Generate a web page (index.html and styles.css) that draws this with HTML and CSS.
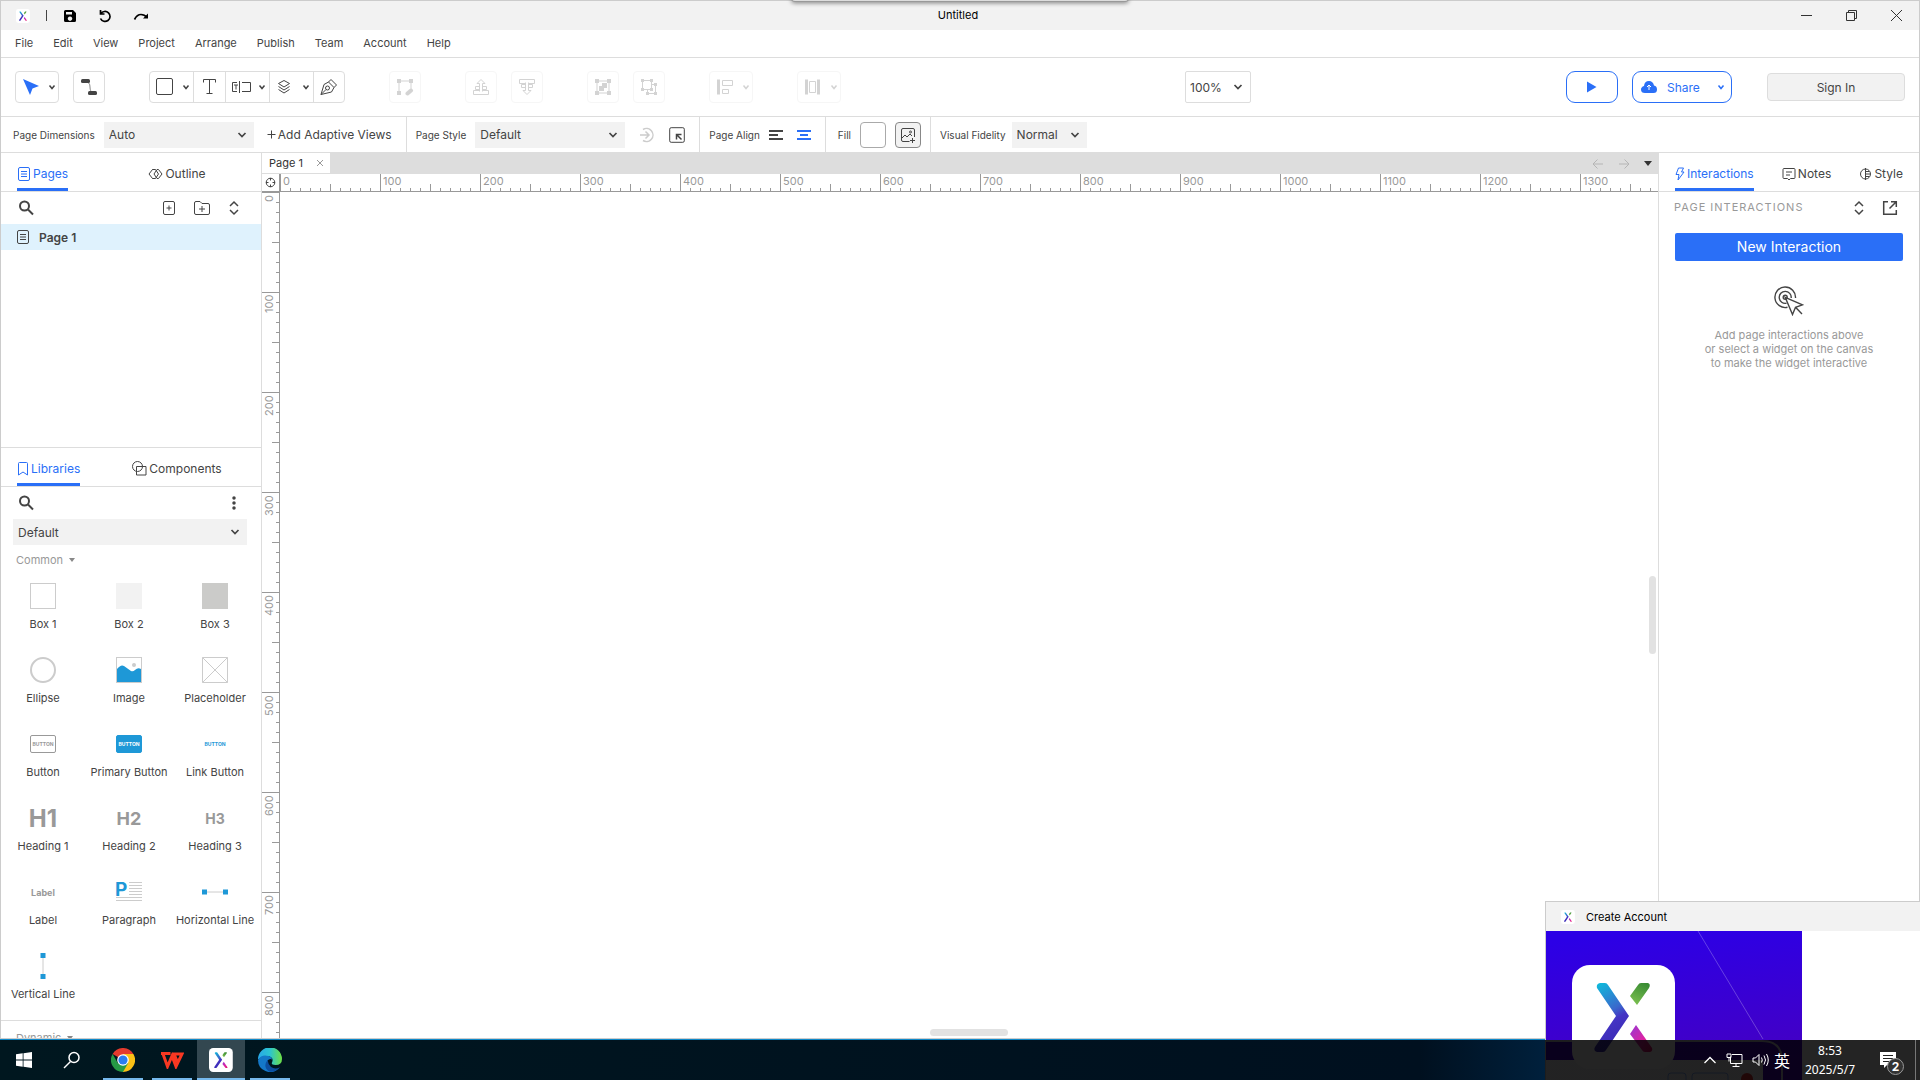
FILE: index.html
```html
<!DOCTYPE html>
<html lang="en">
<head>
  <meta charset="UTF-8" />
  <meta name="viewport" content="width=device-width, initial-scale=1.0" />
  <title>Untitled</title>
  <link rel="stylesheet" href="styles.css">
</head>
<body>
  <svg class="sprite" aria-hidden="true">
    <defs>
      <linearGradient id="gBlue" x1="0" y1="0" x2="0.3" y2="1">
        <stop offset="0" stop-color="#0cc0dc" />
        <stop offset="0.5" stop-color="#3a68cc" />
        <stop offset="0.65" stop-color="#4434c4" />
        <stop offset="1" stop-color="#3a2ab4" />
      </linearGradient>
      <linearGradient id="gGreen" x1="0.7" y1="0" x2="0.3" y2="1">
        <stop offset="0" stop-color="#3a8c34" />
        <stop offset="1" stop-color="#7cc050" />
      </linearGradient>
      <linearGradient id="gPink" x1="0" y1="0" x2="1" y2="1">
        <stop offset="0" stop-color="#9638d4" />
        <stop offset="0.6" stop-color="#e022a0" />
        <stop offset="1" stop-color="#e01060" />
      </linearGradient>
    </defs>
    <symbol id="logo" viewBox="26 34 104 104">
      <rect x="26" y="34" width="103" height="104" rx="18" fill="#fff" stroke="none" />
      <g stroke="none">
        <path d="M54 52h5q2 0 3 2l21 31-23 34q-1 2-3 2h-6q-4-1-2-5l21-31-19-28q-1-4 3-5z" fill="url(#gBlue)" />
        <path d="M95 52h7q3 1 1 5L91 74l-7-9 8-11q1-2 3-2z" fill="url(#gGreen)" />
        <path d="M90 94l16 23q1 3-2 4h-5q-2 0-3-2L84 103z" fill="url(#gPink)" />
      </g>
    </symbol>
    <symbol id="chev" viewBox="0 0 10 10"><path d="M2.500 3.500l2.500 3 2.500-3" /></symbol>
    <symbol id="page" viewBox="0 0 14 16"><rect x="1.500" y="1.500" width="11" height="13" rx="1.500" /><path d="M4 5.500h6M4 8h6M4 10.500h6" /></symbol>
    <symbol id="search" viewBox="0 0 16 16"><circle cx="6.500" cy="6" r="4.500" /><path d="M10 9.500l5 5" /></symbol>
    <symbol id="expand" viewBox="0 0 12 16"><path d="M2 6l4-4 4 4M2 10l4 4 4-4" /></symbol>
  </svg>

  <div class="app">
    <div class="drag-handle"></div>
    <header class="titlebar">
      <div class="quick">
        <svg class="logo-small"><use href="#logo" /></svg>
        <span class="bar"></span>
        <button aria-label="Save"><svg class="solid" width="14" height="14" viewBox="0 0 14 14"><path fill-rule="evenodd" d="M1 2.500Q1 1 2.500 1H10l3 3v7.500q0 1.500-1.500 1.500h-9Q1 13 1 11.500zM3 3v2.500h6V3zM7 7.500a2.200 2.200 0 1 0 .01 0z" /></svg></button>
        <button aria-label="Undo"><svg class="dark" width="14" height="14" viewBox="0 0 14 14"><path d="M2.500 1v4h4M2.800 4.800A5 5 0 1 1 2.500 9.500" /></svg></button>
        <button aria-label="Redo"><svg class="dark" width="16" height="14" viewBox="0 0 16 14"><path d="M1.500 10.500Q4 5.500 8 5.500q3.500 0 6 3" /><path d="M15 4.500v5h-5z" fill="#000" stroke="none" /></svg></button>
      </div>
      <div class="title">Untitled</div>
      <div class="winbuttons">
        <button aria-label="Minimize"><svg width="13" height="13" viewBox="0 0 13 13"><path d="M1 6.500h11" /></svg></button>
        <button aria-label="Restore"><svg width="13" height="13" viewBox="0 0 13 13"><path d="M1.500 3.500h8v8h-8zM3.500 3.500v-2h8v8h-2" /></svg></button>
        <button aria-label="Close"><svg width="13" height="13" viewBox="0 0 13 13"><path d="M1 1l11 11M12 1L1 12" /></svg></button>
      </div>
    </header>

    <nav class="menu">
      <a href="#">File</a><a href="#">Edit</a><a href="#">View</a><a href="#">Project</a><a href="#">Arrange</a><a href="#">Publish</a><a href="#">Team</a><a href="#">Account</a><a href="#">Help</a>
    </nav>

    <div class="toolbar">
      <div class="cluster">
        <button class="tool wide" aria-label="Select"><svg width="18" height="18" viewBox="0 0 18 18"><path d="M1 1l16 7-6.500 2.500L8 17z" fill="#2a6ff7" stroke="none" /></svg><svg class="chev"><use href="#chev" /></svg></button>
        <button class="tool" aria-label="Connect"><svg width="18" height="18" viewBox="0 0 18 18"><path d="M6 4q4 0 4 5t3 5" stroke="#888" /><rect x="1" y="1" width="9" height="4" rx="1.500" fill="#444" stroke="none" /><rect x="8" y="13" width="9" height="4" rx="1.500" fill="#444" stroke="none" /></svg></button>
      </div>
      <div class="cluster joined">
        <button class="tool wide" aria-label="Rectangle"><svg width="18" height="18" viewBox="0 0 18 18"><rect x="0.500" y="0.500" width="16" height="16" rx="1.500" /></svg><svg class="chev"><use href="#chev" /></svg></button>
        <button class="tool" aria-label="Text"><svg width="16" height="18" viewBox="0 0 16 18"><path d="M1.500 4.500V1.500h12v3M7.500 1.500v14M4.500 15.500h6" /></svg></button>
        <button class="tool wide" aria-label="Form"><svg width="20" height="14" viewBox="2 0 20 14"><path d="M7 2.500H2.500v9H7M4 5h4M6 5v4.500M9.500 1v12M12 2.500h8.500v9H12" /></svg><svg class="chev"><use href="#chev" /></svg></button>
        <button class="tool wide" aria-label="Layers"><svg width="16" height="16" viewBox="0 0 16 16"><path d="M8 1.500l5.500 3L8 8 2.500 4.500zM2.500 7.500L8 11l5.500-3.500M2.500 10.500L8 14l5.500-3.500" /></svg><svg class="chev"><use href="#chev" /></svg></button>
        <button class="tool" aria-label="Pen"><svg width="18" height="18" viewBox="0 0 18 18"><path d="M11 1.500L16.500 7 14 9.500l-5.500-5.500zM8.500 4L4 6.500 1 16.500l10.500-2.500L14 9.500M1 16.500L6 11.500" /><circle cx="7.500" cy="10" r="2" /></svg></button>
      </div>
      <div class="cluster">
        <button class="tool" disabled aria-label="Edit points"><svg width="18" height="18" viewBox="0 0 18 18"><path d="M3 3h12M3 3v12M15 3v8" /><path d="M1 1h4v4H1zM13 1h4v4h-4zM1 13h4v4H1z" fill="#555" stroke="none" /><path d="M11.500 15.500l3.500-3" stroke-width="4" stroke-linecap="round" /></svg></button>
      </div>
      <div class="cluster">
        <button class="tool" disabled aria-label="Bring to front"><svg width="18" height="18" viewBox="0 0 18 18"><path d="M7.500 13.500v-8H5L9 1.500l4 4h-2.500v8M7 8.500H3.500v3H7M11 8.500h3.500v3H11M7.500 12.500h-6v4h15v-4h-6" /></svg></button>
        <button class="tool" disabled aria-label="Send to back"><svg width="18" height="18" viewBox="0 0 18 18"><path d="M7.500 4.500v8H5l4 4 4-4h-2.500v-8M7 9.500H3.500v-3H7M11 9.500h3.500v-3H11M7.500 5.500h-6v-4h15v4h-6" /></svg></button>
      </div>
      <div class="cluster">
        <button class="tool" disabled aria-label="Group"><svg width="18" height="18" viewBox="0 0 18 18"><path d="M3 3h12v12H3z" /><path d="M1 1h4v4H1zM13 1h4v4h-4zM1 13h4v4H1zM13 13h4v4h-4zM5 8h3V5h5v5h-3v3H5z" fill="#555" stroke="none" /></svg></button>
        <button class="tool" disabled aria-label="Ungroup"><svg width="18" height="18" viewBox="0 0 18 18"><path d="M2.500 2.500h9v9h-9zM7.500 11.500v4h8v-9h-4" /><path d="M1 1h3v3H1zM10 1h3v3h-3zM1 10h3v3H1zM10 10h3v3h-3zM14 5h3v3h-3zM14 14h3v3h-3zM6 14h3v3H6z" fill="#555" stroke="none" /></svg></button>
      </div>
      <div class="cluster">
        <button class="tool wide" disabled aria-label="Align"><svg width="18" height="18" viewBox="0 0 18 18"><path d="M2.500 1.500v15" stroke-width="3" /><path d="M6.500 2.500h10v5h-10zM6.500 11.500h6v4h-6z" /></svg><svg class="chev"><use href="#chev" /></svg></button>
      </div>
      <div class="cluster">
        <button class="tool wide" disabled aria-label="Distribute"><svg width="18" height="18" viewBox="0 0 18 18"><path d="M2.500 1.500v15M14.500 1.500v15" stroke-width="3" /><path d="M5.500 3.500h6v11h-6z" /></svg><svg class="chev"><use href="#chev" /></svg></button>
      </div>
      <span class="spacer-left"></span>
      <select class="zoom" aria-label="Zoom"><option>100%</option></select>
      <span class="spacer-right"></span>
      <button class="pill play" aria-label="Preview"><svg width="10" height="12" viewBox="0 0 10 12"><path d="M0 0.500L9.500 6 0 11.500z" fill="#2a6ff7" stroke="none" /></svg></button>
      <button class="pill share">
        <svg width="16" height="14" viewBox="0 0 16 14"><path d="M4 13Q0 13 0 9.500 0 7 3 6 3.500 1 8 1q4 0 5 4.500 3 .5 3 4Q16 13 12.500 13z" fill="#2a6ff7" stroke="none" /><path d="M8 10V5M6 7l2-2 2 2" stroke="#fff" /></svg>
        <span>Share</span>
        <svg class="chev"><use href="#chev" /></svg>
      </button>
      <button class="signin">Sign In</button>
    </div>

    <div class="stylebar">
      <div class="section">
        <label for="dim">Page Dimensions</label>
        <select id="dim" class="field"><option>Auto</option></select>
        <button class="adaptive"><svg width="9" height="9" viewBox="0 0 9 9"><path d="M0.500 4.500h8M4.500 0.500v8" /></svg>Add Adaptive Views</button>
      </div>
      <div class="section">
        <label for="pstyle">Page Style</label>
        <select id="pstyle" class="field"><option>Default</option></select>
        <button class="mini faded" aria-label="Update style"><svg width="16" height="16" viewBox="0 0 16 16"><path d="M4 2.500A6.500 6.500 0 1 1 4 13.500M1 8h9M6.500 4.500L10 8l-3.500 3.500" stroke-width="1.500" /></svg></button>
        <button class="mini" aria-label="Manage styles"><svg width="16" height="16" viewBox="0 0 16 16"><rect x="0.700" y="0.700" width="14.600" height="14.600" rx="1.500" /><path d="M12.500 12.500l-4.500-4.500M7.500 12.500v-5h5" stroke-width="1.500" /></svg></button>
      </div>
      <div class="section align">
        <span>Page Align</span>
        <button aria-label="Left"><svg width="14" height="12" viewBox="0 0 14 12"><path d="M0 2h14M0 6h9M0 10h14" stroke-width="2" /></svg></button>
        <button class="mini on" aria-label="Center"><svg width="14" height="12" viewBox="0 0 14 12"><path d="M0 2h14M3 6h8M0 10h14" stroke-width="2" /></svg></button>
      </div>
      <div class="section fill">
        <span>Fill</span>
        <button class="swatch" aria-label="Fill color"></button>
        <button class="swatch image" aria-label="Fill image"><svg width="16" height="16" viewBox="0 0 16 16"><path d="M9.500 14.500H3q-1.500 0-1.500-1.500V3Q1.500 1.500 3 1.500h10q1.500 0 1.500 1.500v7M2 11l3-3 2 2 3-3 2 2M12.500 11v5M10 13.500h5" /><circle cx="10.500" cy="5" r="1" /></svg></button>
      </div>
      <div class="section fidelity">
        <label for="fid">Visual Fidelity</label>
        <select id="fid" class="field short"><option>Normal</option></select>
      </div>
    </div>

    <main class="workspace">
      <aside class="left">
        <section class="pages">
          <div class="tabs">
            <div><button class="tab active"><svg width="14" height="16"><use href="#page" /></svg>Pages</button></div>
            <div><button class="tab"><svg width="15" height="14" viewBox="0 0 15 14"><path d="M5.500 2.500h-1L1 7l3.500 4.500h1M6 7l3-4.500h1.500L14 7l-3.500 4.500H9z" /><path d="M4.500 2.500h3l3 4.500-3 4.500h-3" /></svg>Outline</button></div>
          </div>
          <div class="actions">
            <button class="mini" aria-label="Search pages"><svg class="bold" width="16" height="16"><use href="#search" /></svg></button>
            <div class="right-actions">
              <button class="mini" aria-label="Add page"><svg width="14" height="16" viewBox="0 0 14 16"><rect x="1.500" y="1.500" width="11" height="13" rx="1.500" /><path d="M4.500 8h5M7 5.500v5" /></svg></button>
              <button class="mini" aria-label="Add folder"><svg width="16" height="16" viewBox="0 0 16 16"><path d="M.5 3q0-1.500 1.500-1.500h4l2 2h6q1.500 0 1.500 1.500v8q0 1.500-1.500 1.500H2Q.5 14.500.5 13zM5 9h6M8 6v6" /></svg></button>
              <button class="mini" aria-label="Expand all"><svg class="mid" width="12" height="16"><use href="#expand" /></svg></button>
            </div>
          </div>
          <div class="page-row"><svg width="14" height="16"><use href="#page" /></svg>Page 1</div>
        </section>

        <section class="libraries">
          <div class="tabs">
            <div><button class="tab active"><svg width="12" height="14" viewBox="0 0 12 14"><path d="M1.500 1.500q0-1 1-1h7q1 0 1 1v11.500L6 10l-4.500 3z" /></svg>Libraries</button></div>
            <div><button class="tab"><svg width="15" height="15" viewBox="0 0 15 15"><circle cx="5.500" cy="5.500" r="5" /><path d="M4.500 5.500h9.500v8.500H4.500z" /></svg>Components</button></div>
          </div>
          <div class="actions">
            <button class="mini" aria-label="Search libraries"><svg class="bold" width="16" height="16"><use href="#search" /></svg></button>
            <div class="right-actions">
              <button class="mini" aria-label="Library options"><svg width="12" height="16" viewBox="0 0 12 16"><path d="M6 3v.01M6 8v.01M6 13v.01" stroke-width="3.500" stroke-linecap="round" /></svg></button>
            </div>
          </div>
          <select class="field library" aria-label="Library"><option>Default</option></select>
          <button class="category">Common <i></i></button>
          <div class="widgets">
            <figure><div class="pic"><i class="box"></i></div><figcaption>Box 1</figcaption></figure>
            <figure><div class="pic"><i class="box box2"></i></div><figcaption>Box 2</figcaption></figure>
            <figure><div class="pic"><i class="box box3"></i></div><figcaption>Box 3</figcaption></figure>
            <figure><div class="pic"><i class="box ellipse"></i></div><figcaption>Ellipse</figcaption></figure>
            <figure><div class="pic"><svg width="26" height="26" viewBox="0 0 26 26"><rect x="0.500" y="0.500" width="25" height="25" fill="#fff" stroke="#ccc" /><path d="M1 12q4-5 7-3l7 5q2 1 4-1 3-3 6-1v13H1z" fill="#1e98d7" stroke="none" /><circle cx="18" cy="8" r="2" fill="#ccc" stroke="none" /></svg></div><figcaption>Image</figcaption></figure>
            <figure><div class="pic"><svg width="26" height="26" viewBox="0 0 26 26"><path d="M.5.5h25v25H.5zM.5.5l25 25M25.500.5l-25 25" stroke="#ccc" /></svg></div><figcaption>Placeholder</figcaption></figure>
            <figure><div class="pic"><span class="btn">BUTTON</span></div><figcaption>Button</figcaption></figure>
            <figure><div class="pic"><span class="btn primary">BUTTON</span></div><figcaption>Primary Button</figcaption></figure>
            <figure><div class="pic"><span class="btn link">BUTTON</span></div><figcaption>Link Button</figcaption></figure>
            <figure><div class="pic"><b class="h1">H1</b></div><figcaption>Heading 1</figcaption></figure>
            <figure><div class="pic"><b class="h2">H2</b></div><figcaption>Heading 2</figcaption></figure>
            <figure><div class="pic"><b class="h3">H3</b></div><figcaption>Heading 3</figcaption></figure>
            <figure><div class="pic"><b class="lbl">Label</b></div><figcaption>Label</figcaption></figure>
            <figure><div class="pic"><svg class="paragraph" width="26" height="20" viewBox="0 0 26 20"><path d="M13 .5h13M13 3.500h13M13 6.500h13M13 9.500h13M13 12.500h13M0 15.500h26M0 18.500h26" stroke="#ccc" /><text x="-1" y="14" class="para">P</text></svg></div><figcaption>Paragraph</figcaption></figure>
            <figure><div class="pic"><svg width="26" height="6" viewBox="0 0 26 6"><path d="M0 3h26" stroke="#ccc" /><path d="M0 .5h5v5H0zM21 .5h5v5h-5z" fill="#1e98d7" stroke="none" /></svg></div><figcaption>Horizontal Line</figcaption></figure>
            <figure><div class="pic"><svg width="6" height="26" viewBox="0 0 6 26"><path d="M3 0v26" stroke="#ccc" /><path d="M.5 0h5v5h-5zM.5 21h5v5h-5z" fill="#1e98d7" stroke="none" /></svg></div><figcaption>Vertical Line</figcaption></figure>
          </div>
          <button class="category next">Dynamic <i></i></button>
        </section>
      </aside>

      <section class="center">
        <div class="doc-tabs">
          <div class="doc-tab">Page 1<button aria-label="Close tab"><svg width="8" height="8" viewBox="0 0 8 8"><path d="M1 1l6 6M7 1L1 7" /></svg></button></div>
          <div class="doc-nav">
            <svg width="12" height="12" viewBox="0 0 12 12"><path d="M11 6H1M5.500 1.500L1 6l4.500 4.500" /></svg>
            <svg width="12" height="12" viewBox="0 0 12 12"><path d="M1 6h10M6.500 1.500L11 6l-4.500 4.500" /></svg>
            <i></i>
          </div>
        </div>
        <div class="board">
          <div class="corner"><svg width="11" height="11" viewBox="0 0 11 11"><circle cx="5.500" cy="5.500" r="4.300" /><path d="M5.500 1v2.500M5.500 7.500V10M1 5.500h2.500M7.500 5.500H10" /></svg></div>
          <div class="ruler-x"><span>0</span><span>100</span><span>200</span><span>300</span><span>400</span><span>500</span><span>600</span><span>700</span><span>800</span><span>900</span><span>1000</span><span>1100</span><span>1200</span><span>1300</span></div>
          <div class="ruler-y"><span>0</span><span>100</span><span>200</span><span>300</span><span>400</span><span>500</span><span>600</span><span>700</span><span>800</span></div>
          <div class="canvas"><i class="scroll-y"></i><i class="scroll-x"></i></div>
        </div>
      </section>

      <aside class="right">
        <div class="tabs">
          <button class="tab active"><svg width="10" height="14" viewBox="0 0 10 14"><path d="M3.500 1h5L6.500 5H9L3 13l1-5.500H1z" /></svg>Interactions</button>
          <button class="tab"><svg width="14" height="14" viewBox="0 0 14 14"><path d="M2 1.500h10q1 0 1 1v8q0 1-1 1H8.500L7 13l-1.500-1.500H2q-1 0-1-1v-8q0-1 1-1zM4 5h6M4 8h4" /></svg>Notes</button>
          <button class="tab"><svg width="13" height="14" viewBox="0 0 13 14"><circle cx="6.500" cy="7" r="5" /><path d="M6.500 1v12M7 4.500h3M7 7h4M7 9.500h3" /></svg>Style</button>
        </div>
        <div class="panel-head">
          <span>PAGE INTERACTIONS</span>
          <button class="mini" aria-label="Expand"><svg class="mid" width="12" height="16"><use href="#expand" /></svg></button>
          <button class="mini" aria-label="Open in window"><svg class="mid" width="16" height="16" viewBox="0 0 16 16"><path d="M6 1.700H1.700v12.600h12.600V10M9 1.700h5.300V7M14 2L7.500 8.500" /></svg></button>
        </div>
        <button class="new-interaction">New Interaction</button>
        <div class="hint">
          <svg class="target" width="30" height="30" viewBox="0 0 30 30"><path d="M13.500 21.300A10.300 10.300 0 1 1 21.500 12M12.500 17.200A6 6 0 1 1 17.200 12" /><circle cx="11.200" cy="11.200" r="2" /><path d="M11.200 11.300l17.300 7.500-7 2.500-3 7.200zM21.500 21.300L28 28" /></svg>
          <p>Add page interactions above<br>or select a widget on the canvas<br>to make the widget interactive</p>
        </div>
      </aside>
    </main>
  </div>

  <div class="popup">
    <div class="popup-title"><svg class="logo-small"><use href="#logo" /></svg>Create Account</div>
    <svg class="art" width="256" height="149" viewBox="0 0 256 149">
      <defs><linearGradient id="gArt" x1="0.400" y1="0" x2="0.600" y2="1"><stop offset="0" stop-color="#2c00e6" /><stop offset="1" stop-color="#4600c0" /></linearGradient></defs>
      <path d="M0 0h256v149H0z" fill="url(#gArt)" stroke="none" />
      <path d="M152 0l65 108" stroke="#fff" stroke-opacity="0.250" />
      <path d="M0 110h216q20 0 20 20v19" stroke="#c8c8d8" stroke-width="2" />
      <path d="M0 129h217v20H0z" fill="#f4f4f6" stroke="none" />
      <rect x="122" y="142" width="18" height="10" rx="3" stroke="#2a6ff7" stroke-opacity="0.500" />
      <rect x="146" y="142" width="36" height="10" rx="3" stroke="#2a6ff7" stroke-opacity="0.500" />
      <circle cx="201" cy="148" r="6" fill="#e03030" stroke="none" />
      <use href="#logo" x="26" y="34" width="104" height="104" />
    </svg>
  </div>

  <footer class="taskbar">
    <button class="task" aria-label="Start"><svg width="16" height="16" viewBox="0 0 16 16"><path d="M0 2.300l6.700-1v6.200H0zM7.500 1.200L16 0v7.500H7.500zM0 8.500h6.700v6.200l-6.700-1zM7.500 8.500H16V16l-8.500-1.200z" fill="#fff" stroke="none" /></svg></button>
    <button class="task" aria-label="Search"><svg width="18" height="18" viewBox="0 0 18 18"><circle cx="11" cy="6.500" r="5" stroke="#fff" stroke-width="1.500" /><path d="M7.500 10.500L1 17" stroke="#fff" stroke-width="1.500" /></svg></button>
    <div class="running">
      <button class="task open" aria-label="Chrome"><svg width="24" height="24" viewBox="0 0 24 24"><g stroke="none"><path d="M12 12L1.600 6A12 12 0 0 1 22.400 6z" fill="#e33b2e" /><path d="M12 12V6h10.400A12 12 0 0 1 12 24z" fill="#fbc116" /><path d="M12 12l5.200 3L12 24A12 12 0 0 1 1.600 6l5.200 9z" fill="#269a45" /><circle cx="12" cy="12" r="5.800" fill="#fff" /><circle cx="12" cy="12" r="4.600" fill="#2a7df0" /></g></svg></button>
      <button class="task open" aria-label="WPS"><svg width="24" height="18" viewBox="0 0 24 18"><path d="M1 2.500h9.500M3 3l4.500 12.500L12 5l4 10.500L22 3h-8l3.500 8" stroke="#f93822" stroke-width="3" /></svg></button>
      <button class="task open current" aria-label="Axure RP"><svg width="24" height="24"><use href="#logo" /></svg></button>
      <button class="task open" aria-label="Edge"><svg width="24" height="24" viewBox="0 0 24 24"><defs><linearGradient id="gEdge" x1="0" y1="0.300" x2="1" y2="0.300"><stop offset="0" stop-color="#28a8e8" /><stop offset="0.500" stop-color="#2cc4d0" /><stop offset="1" stop-color="#6ee044" /></linearGradient></defs><g stroke="none"><path d="M0 11.500A12 12 0 0 1 24 11q0 6-6.500 6-5 0-3.300-3Q16 9 9.500 8 4 8 0 11.500z" fill="url(#gEdge)" /><path d="M0 12q3-5 8.500-4.300 5 .3 5.600 3.800-2.600-1.500-4.600 1-2 4 1 7.500 4 4 10 .5A12 12 0 0 1 0 12z" fill="#1478c8" /><path d="M9.500 12q-5 7 1.500 11.500 7 1 11-4.300-5 2.500-9-.2-3-3-3.500-7z" fill="#0c4fa0" /></g></svg></button>
    </div>
    <div class="tray">
      <svg width="14" height="10" viewBox="0 0 14 10"><path d="M1.500 8L7 2.500 12.500 8" stroke-width="1.300" /></svg>
      <svg width="17" height="14" viewBox="0 0 17 14"><path d="M4.500 3.500v7h11.500v-9H6M10 10.500v3M6.500 13.500h7M1 1h4v3.500H1zM3 4.500v4" /></svg>
      <svg width="17" height="14" viewBox="0 0 17 14"><path d="M1 5h2.500L7 1.500v11L3.500 9H1zM9.500 4.500q1.500 2.500 0 5M12 2.500q3 4.500 0 9M14.500 1q3.500 6 0 12" /></svg>
      <span class="ime" lang="zh">英</span>
      <div class="clock"><span>8:53</span><span>2025/5/7</span></div>
      <button class="notes" aria-label="Notifications"><svg width="16" height="16" viewBox="0 0 16 16"><path d="M0 0h16v13H7l-3 3v-3H0z" fill="#fff" stroke="none" /><path d="M3 3.500h10M3 6.500h10M3 9.500h6" stroke="#222" /></svg><span class="count">2</span></button>
      <span class="desk"></span>
    </div>
  </footer>
</body>
</html>
```
FILE: styles.css
```css
* {
  box-sizing: border-box;
}

body {
  margin: 0;
  height: 100vh;
  display: flex;
  flex-direction: column;
  position: relative;
  overflow: hidden;
  background: #0f88c8;
  font-family: Inter, "Liberation Sans", sans-serif;
  font-size: 12px;
  color: #444;
}

button,
select {
  font: inherit;
  color: inherit;
  background: none;
  border: 0;
  padding: 0;
  border-radius: 0;
}

button {
  display: flex;
  align-items: center;
  justify-content: center;
}

a {
  color: inherit;
  text-decoration: none;
}

svg {
  display: block;
  flex: none;
  fill: none;
  stroke: currentColor;
}

.sprite {
  position: absolute;
  width: 0;
  height: 0;
}

.bold {
  stroke-width: 2;
}

.mid {
  stroke-width: 1.5;
}

.app {
  flex: 1;
  min-height: 0;
  margin-bottom: 1px;
  display: flex;
  flex-direction: column;
  position: relative;
  background: #fff;
  border: 1px solid #ccc;
}

/* edge of the hidden floating bar */
.drag-handle {
  position: absolute;
  top: -3px;
  left: 50%;
  margin-left: -169px;
  width: 338px;
  height: 4px;
  border: 1px solid #999;
  border-radius: 0 0 5px 5px;
  background: #ddd;
  box-shadow: 0 1px 4px rgba(0, 0, 0, 0.5);
}

/* title bar and menu */
.titlebar {
  display: grid;
  grid-template-columns: 1fr auto 1fr;
  align-items: center;
  height: 29px;
  background: #f2f2f2;
  color: #000;
}

.title {
  padding: 0 4px 2px 0;
  font-size: 11px;
}

.quick {
  display: flex;
  align-items: center;
  gap: 21px;
  padding-left: 15px;
}

.logo-small {
  width: 14px;
  height: 14px;
}

.bar {
  width: 1px;
  height: 11px;
  margin: 0 -5px;
  background: #444;
}

.solid {
  fill: #000;
  stroke: none;
}

.dark {
  stroke: #000;
  stroke-width: 1.7;
}

.winbuttons {
  display: flex;
  justify-content: flex-end;
  gap: 32px;
  padding-right: 16px;
  color: #333;
}

.menu {
  display: flex;
  align-items: center;
  gap: 20px;
  height: 28px;
  padding: 0 0 2px 14px;
  border-bottom: 1px solid #ddd;
  font-size: 11px;
}

/* toolbar */
.toolbar {
  display: flex;
  align-items: center;
  height: 59px;
  padding: 0 14px;
  border-bottom: 1px solid #ddd;
}

.cluster {
  display: flex;
  gap: 14px;
  margin-right: 44px;
}

.tool {
  width: 32px;
  height: 32px;
  border: 1px solid #ddd;
  border-radius: 4px;
}

.tool:disabled {
  opacity: 0.25;
  color: #555;
}

.wide {
  width: 44px;
  justify-content: space-between;
  padding: 0 1px 0 6px;
}

.chev {
  width: 10px;
  height: 10px;
  stroke-width: 1.5;
}

.joined {
  gap: 0;
  border: 1px solid #ddd;
  border-radius: 4px;
}

.joined .tool {
  height: 30px;
  border-width: 0 1px 0 0;
  border-radius: 0;
}

.joined .wide {
  padding-right: 2px;
}

.joined .tool:last-child {
  width: 30px;
  border: 0;
}

.spacer-left {
  flex: 20;
}

.spacer-right {
  flex: 21;
}

.zoom,
.field {
  appearance: none;
  font-size: 12px;
  background: #f2f2f2 url("data:image/svg+xml,%3Csvg xmlns='http://www.w3.org/2000/svg' width='10' height='8' fill='none' stroke='%23444' stroke-width='1.7'%3E%3Cpath d='M1.500 2l3.500 3.500L8.500 2'/%3E%3C/svg%3E") no-repeat right 7px center;
}

.zoom {
  width: 66px;
  height: 32px;
  padding-left: 4px;
  border: 1px solid #ddd;
  border-radius: 2px;
  background-color: #fff;
}

.pill {
  height: 32px;
  border: 1px solid #2a6ff7;
  border-radius: 9px;
  color: #2a6ff7;
}

.play {
  width: 52px;
}

.share {
  width: 100px;
  margin-left: 14px;
  padding: 0 5px 0 8px;
  gap: 10px;
}

.share .chev {
  margin-left: auto;
}

.signin {
  width: 138px;
  height: 28px;
  margin-left: 35px;
  border: 1px solid #ddd;
  border-radius: 4px;
  background: #f2f2f2;
}

/* page style bar */
.stylebar {
  display: flex;
  height: 36px;
  border-bottom: 1px solid #ddd;
  font-size: 10px;
}

.section {
  display: flex;
  align-items: center;
  gap: 9px;
  padding: 0 14px 0 9px;
  border-right: 1px solid #ddd;
}

.section:first-child {
  padding-left: 12px;
}

.section:last-child {
  border: 0;
}

.field {
  width: 150px;
  height: 26px;
  padding-left: 5px;
}

.short {
  width: 75px;
}

.adaptive {
  gap: 2px;
  margin-left: 4px;
  font-size: 12px;
}

.section .mini {
  margin-left: 5px;
}

.faded {
  color: #ccc;
}

.on {
  color: #2a6ff7;
}

.fill {
  padding: 0 9px 0 12px;
}

.swatch {
  width: 26px;
  height: 26px;
  border: 1px solid #aaa;
  border-radius: 4px;
}

.image {
  border-color: #888;
  background: #f2f2f2;
}

.fidelity {
  gap: 6px;
}

/* main area */
.workspace {
  flex: 1;
  min-height: 0;
  display: grid;
  grid-template-columns: 261px 1fr 261px;
}

.left {
  display: flex;
  flex-direction: column;
  min-height: 0;
  border-right: 1px solid #ddd;
}

.tabs {
  display: grid;
  grid-template-columns: 92px 1fr;
  height: 39px;
  border-bottom: 1px solid #ddd;
}

.tabs > div {
  display: flex;
  justify-content: center;
}

.tabs > div:first-child {
  justify-content: flex-start;
  padding-left: 16px;
}

.tab {
  gap: 2px;
  padding-top: 6px;
  border-bottom: 3px solid transparent;
  white-space: nowrap;
}

.active {
  color: #2a6ff7;
  border-color: #2a6ff7;
}

.actions {
  display: flex;
  align-items: center;
  justify-content: space-between;
  height: 32px;
  padding: 0 21px 0 17px;
}

.right-actions {
  display: flex;
  gap: 18px;
}

.pages {
  flex: none;
  height: 294px;
}

.page-row {
  display: flex;
  align-items: center;
  gap: 9px;
  height: 26px;
  padding-left: 15px;
  background: #dff2fd;
  font-weight: 600;
}

.libraries {
  flex: 1;
  min-height: 0;
  overflow: hidden;
  border-top: 1px solid #ddd;
}

.library {
  display: block;
  width: 234px;
  margin-left: 12px;
}

.category {
  gap: 6px;
  height: 30px;
  padding-left: 15px;
  font-size: 11px;
  color: #999;
}

.category i {
  border: 3px solid transparent;
  border-top: 4px solid #888;
  border-bottom: 0;
}

.next {
  width: 100%;
  height: 34px;
  justify-content: flex-start;
  border-top: 1px solid #ddd;
}

.widgets {
  display: grid;
  grid-template-columns: repeat(3, 86px);
  margin: 0 0 1px -1px;
}

figure {
  display: flex;
  flex-direction: column;
  align-items: center;
  height: 74px;
  margin: 0;
}

.pic {
  display: flex;
  align-items: center;
  justify-content: center;
  width: 86px;
  height: 42px;
}

figcaption {
  font-size: 11px;
  line-height: 14px;
  white-space: nowrap;
}

.box {
  width: 26px;
  height: 26px;
  border: 1px solid #ccc;
}

.box2 {
  background: #f2f2f2;
  border: 0;
}

.box3 {
  background: #cbcbc9;
  border: 0;
}

.ellipse {
  border-width: 2px;
  border-radius: 50%;
}

.btn {
  width: 26px;
  height: 18px;
  border: 1px solid #999;
  border-radius: 2px;
  font-size: 5px;
  font-weight: 700;
  line-height: 16px;
  text-align: center;
  color: #999;
}

.primary {
  background: #1e98d7;
  border-color: #1e98d7;
  color: #fff;
}

.link {
  border-color: transparent;
  color: #1e98d7;
}

.h1,
.h2,
.h3,
.lbl {
  color: #999;
}

.h1 {
  font-size: 24px;
}

.h2 {
  font-size: 18px;
}

.h3 {
  font-size: 14px;
}

.lbl {
  font-size: 9px;
}

.paragraph {
  overflow: visible;
}

.para {
  font-size: 19px;
  font-weight: 700;
  fill: #1e98d7;
  stroke: none;
}

/* canvas */
.center {
  display: flex;
  flex-direction: column;
  min-width: 0;
  min-height: 0;
}

.doc-tabs {
  display: flex;
  justify-content: space-between;
  height: 21px;
  background: #ddd;
}

.doc-tab {
  display: flex;
  align-items: center;
  gap: 13px;
  height: 20px;
  padding: 0 6px 1px 7px;
  background: #fff;
  font-size: 11px;
  color: #333;
}

.doc-tab svg {
  stroke: #999;
}

.doc-nav {
  display: flex;
  align-items: center;
  gap: 14px;
  padding-right: 6px;
  color: #b5b5b5;
}

.doc-nav i {
  border: 4px solid transparent;
  border-top: 5px solid #333;
  border-bottom: 0;
}

.board {
  flex: 1;
  min-height: 0;
  display: grid;
  grid-template: 18px 1fr / 18px 1fr;
}

.corner {
  display: flex;
  align-items: center;
  justify-content: center;
  border-right: 1px solid #999;
  border-bottom: 1px solid #999;
}

.ruler-x,
.ruler-y {
  display: flex;
  overflow: hidden;
  color: #999;
  font-size: 11px;
  line-height: 14px;
}

.ruler-x {
  border-bottom: 1px solid #999;
  background:
    repeating-linear-gradient(to right, #999 0 1px, transparent 1px 10px) 0 100% / 100% 3px no-repeat,
    repeating-linear-gradient(to right, #999 0 1px, transparent 1px 50px) 0 100% / 100% 7px no-repeat,
    repeating-linear-gradient(to right, #999 0 1px, transparent 1px 100px);
}

.ruler-x span {
  flex: none;
  width: 100px;
  padding-left: 3px;
}

.ruler-y {
  flex-direction: column;
  border-right: 1px solid #999;
  background:
    repeating-linear-gradient(to bottom, #999 0 1px, transparent 1px 10px) 100% 0 / 3px 100% no-repeat,
    repeating-linear-gradient(to bottom, #999 0 1px, transparent 1px 50px) 100% 0 / 7px 100% no-repeat,
    repeating-linear-gradient(to bottom, #999 0 1px, transparent 1px 100px);
}

.ruler-y span {
  flex: none;
  width: 14px;
  height: 100px;
  padding-bottom: 3px;
  writing-mode: vertical-rl;
  transform: rotate(180deg);
  text-align: right;
}

.canvas {
  position: relative;
}

.scroll-y,
.scroll-x {
  position: absolute;
  border-radius: 4px;
  background: #e2e2e2;
}

.scroll-y {
  top: 45%;
  right: 2px;
  margin-top: 3px;
  width: 7px;
  height: 78px;
}

.scroll-x {
  left: 47%;
  bottom: 2px;
  margin-left: 2px;
  width: 78px;
  height: 7px;
}

/* interactions panel */
.right {
  border-left: 1px solid #ddd;
}

.right .tabs {
  display: flex;
  justify-content: space-between;
  padding: 0 16px;
}

.panel-head {
  display: flex;
  align-items: center;
  gap: 17px;
  height: 32px;
  padding: 0 21px 0 15px;
  font-size: 11px;
  color: #444;
}

.panel-head span {
  flex: 1;
  padding-bottom: 2px;
  color: #999;
  letter-spacing: 1px;
}

.new-interaction {
  width: calc(100% - 32px);
  height: 28px;
  margin: 9px 16px 25px;
  padding-bottom: 2px;
  border-radius: 2px;
  background: #2a6ff7;
  color: #fff;
  font-size: 14px;
}

.hint {
  display: flex;
  flex-direction: column;
  align-items: center;
  color: #444;
}

.target {
  stroke-width: 1.4;
}

.hint p {
  margin: 12px 0 0;
  font-size: 11px;
  line-height: 14px;
  text-align: center;
  color: #999;
}

/* second window, partly under the taskbar */
.popup {
  position: absolute;
  right: 0;
  bottom: 0;
  width: 375px;
  border: 1px solid #ccc;
  border-width: 1px 0 0 1px;
  background: #fff;
}

.popup-title {
  display: flex;
  align-items: center;
  gap: 11px;
  height: 29px;
  padding-left: 15px;
  background: #f2f2f2;
  font-size: 11px;
  color: #000;
}

/* taskbar */
.taskbar {
  position: relative;
  display: flex;
  height: 40px;
  background: linear-gradient(to right, #00171f 0, #00101f calc(100% - 500px), #00203c calc(100% - 375px), rgba(0, 0, 0, 0.86) calc(100% - 375px));
  color: #fff;
}

.running {
  display: flex;
  gap: 1px;
  margin-left: 3px;
}

.task {
  position: relative;
  width: 48px;
}

.open::after {
  content: "";
  position: absolute;
  left: 4px;
  right: 4px;
  bottom: 0;
  height: 2px;
  background: #76b9ed;
}

.current {
  background: #334750;
}

.current::after {
  left: 0;
  right: 0;
}

.tray {
  display: flex;
  align-items: center;
  gap: 9px;
  margin-left: auto;
  padding-right: 4px;
}

.ime {
  margin-left: -4px;
  font-family: "Noto Sans CJK SC", sans-serif;
  font-size: 16px;
  line-height: 20px;
}

.clock {
  display: flex;
  flex-direction: column;
  align-items: center;
  width: 62px;
  font-family: "Noto Sans", sans-serif;
  font-size: 12px;
  line-height: 19px;
}

.notes {
  position: relative;
  margin: 0 10px;
}

.count {
  position: absolute;
  left: 7px;
  top: 6px;
  width: 17px;
  height: 17px;
  border: 1px solid #999;
  border-radius: 50%;
  background: #333;
  font-weight: 700;
  line-height: 15px;
}

.desk {
  align-self: stretch;
  width: 1px;
  background: #777;
}
```
